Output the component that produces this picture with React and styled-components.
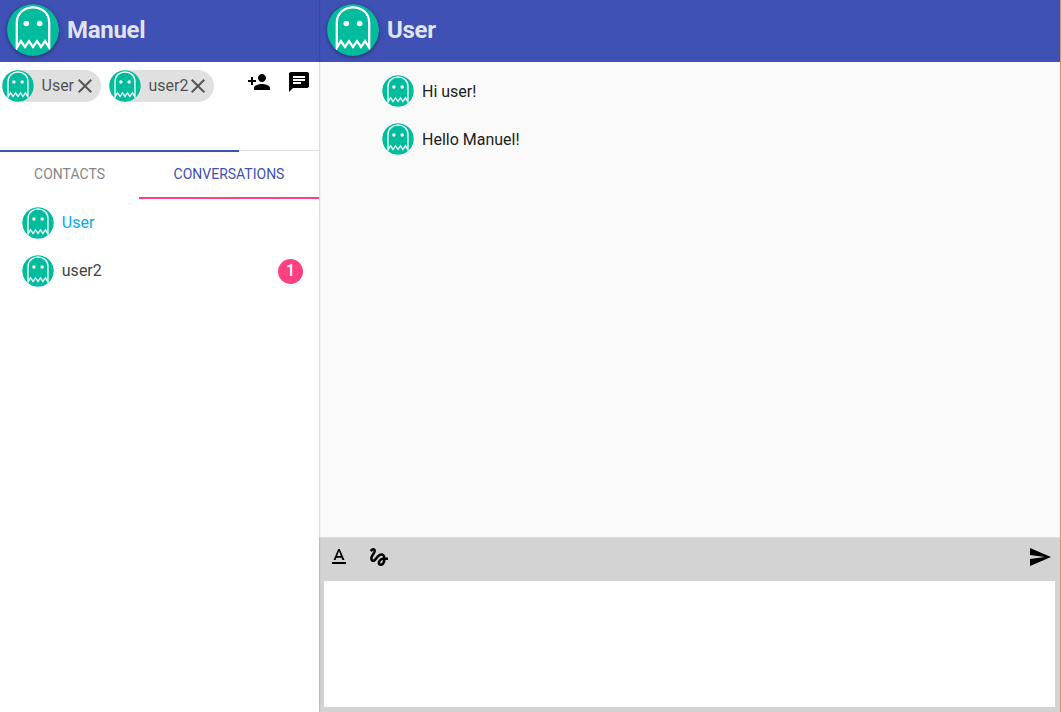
import React from "react";
import styled, { createGlobalStyle } from "styled-components";
import { MdPersonAdd, MdChat, MdClose, MdTextFormat, MdGesture, MdSend } from "react-icons/md";

const GlobalStyle = createGlobalStyle`
  * { box-sizing: border-box; }
  body { margin: 0; background: #fafafa; font-family: Roboto, "Liberation Sans", sans-serif; font-size: 16px; overflow: hidden; }
`;

const Page = styled.div`
  display: flex;
  width: 100vw;
  height: 100vh;
  border-right: 1px solid #db9359;
`;

const Sidebar = styled.aside`
  display: flex;
  flex-direction: column;
  flex: 0 0 319px;
  background: #fff;
  box-shadow: 0 0 2px rgba(0, 0, 0, 0.35);
  z-index: 1;
`;

const Main = styled.main`
  display: flex;
  flex-direction: column;
  flex: 1;
  min-width: 0;
`;

const Header = styled.header`
  display: flex;
  align-items: center;
  flex: 0 0 62px;
  gap: 8px;
  padding: 0 7px 2px ${(p) => p.$inset}px;
  background: #3f51b5;
`;

const Title = styled.h1`
  margin: 0;
  font-size: 24px;
  line-height: 28px;
  font-weight: 700;
  letter-spacing: -0.3px;
  color: rgba(255, 255, 255, 0.87);
`;

const AvatarSvg = styled.svg`
  display: block;
  flex: none;
  width: ${(p) => p.$size}px;
  height: ${(p) => p.$size}px;
  border-radius: 50%;
  box-shadow: ${(p) => (p.$raised ? "0 1px 4px rgba(0, 0, 0, 0.4)" : "none")};
`;

function Avatar({ size = 32, raised = false }) {
  return (
    <AvatarSvg $size={size} $raised={raised} viewBox="0 0 52 52">
      <circle cx="26" cy="26" r={raised ? 26 : 25.6} fill="#00bc9c" />
      <path
        d="M9.8 43.8V18.5C9.8 9.5 17 3.3 26 3.3S42.2 9.5 42.2 18.5V43.8L38.1 37.2L34 43L30 37.2L26 43L22 37.2L18 43L13.9 37.2Z"
        fill="none"
        stroke="#fff"
        strokeOpacity={raised ? 1 : 0.9}
        strokeWidth="2.3"
      />
      <circle cx="19.3" cy="19.5" r="2.8" fill="#fff" />
      <circle cx="32.7" cy="19.5" r="2.8" fill="#fff" />
    </AvatarSvg>
  );
}

const Picker = styled.div`
  display: flex;
  flex: 0 0 90px;
  justify-content: space-between;
  padding-top: 8px;
  background: linear-gradient(#3f51b5, #3f51b5) 0 88px / 239px 2px no-repeat,
    linear-gradient(#e0e0e0, #e0e0e0) 0 88px / 100% 1px no-repeat;
`;

const Chips = styled.div`
  display: flex;
  align-items: flex-start;
  gap: 8px;
  padding-left: 2px;
`;

const Chip = styled.div`
  display: flex;
  align-items: center;
  width: ${(p) => p.$width}px;
  height: 32px;
  border-radius: 16px;
  background: #e0e0e0;
  color: rgba(0, 0, 0, 0.67);
`;

const ChipLabel = styled.span`
  flex: 1;
  padding-left: 7.5px;
  line-height: 32px;
  white-space: nowrap;
`;

const ChipClose = styled(MdClose)`
  flex: none;
  margin-left: -4px;
  margin-right: 4px;
  color: rgba(0, 0, 0, 0.62);
`;

const Actions = styled.div`
  display: flex;
  align-items: flex-start;
  gap: 16px;
  padding-right: 8px;
`;

const Tabs = styled.nav`
  display: flex;
  flex: 0 0 47px;
`;

const Tab = styled.button`
  flex: 0 0 ${(p) => p.$width}px;
  padding: 0 0 1px;
  border: 0;
  border-bottom: 2px solid ${(p) => (p.$active ? "#ff4081" : "transparent")};
  background: none;
  font: 14px Roboto, sans-serif;
  color: ${(p) => (p.$active ? "#3f51b5" : "#868686")};
`;

const Conversation = styled.div`
  display: flex;
  align-items: center;
  height: 48px;
  gap: 7.5px;
  padding: 0 16px 0 22.3px;
  color: ${(p) => (p.$active ? "#03a9f4" : "#424242")};
`;

const RowLabel = styled.span`
  flex: 1;
  padding-bottom: 1px;
`;

const Badge = styled.span`
  width: 25px;
  height: 25px;
  border-radius: 50%;
  background: #ff4081;
  color: #fff;
  font-weight: 500;
  line-height: 24px;
  text-align: center;
`;

const Messages = styled.section`
  flex: 1;
  padding: 5px 0 0 63px;
  background: #fafafa;
`;

const Message = styled.div`
  display: flex;
  align-items: center;
  height: 48px;
  gap: 8px;
  color: #212121;
`;

const Composer = styled.footer`
  display: flex;
  flex-direction: column;
  flex: 0 0 175px;
  padding: 0 5px 5px;
  border-top: 1px solid #dedede;
  background: #d3d3d3;
`;

const ComposerTools = styled.div`
  display: flex;
  flex: 0 0 43px;
  gap: 16px;
  padding: 7px 3px 0;
`;

const Send = styled(MdSend)`
  margin-left: auto;
`;

const Editor = styled.textarea`
  flex: 1;
  border: 0;
  padding: 8px;
  resize: none;
  outline: none;
  background: #fff;
  font: inherit;
`;

export default function App() {
  return (
    <>
      <GlobalStyle />
      <Page>
        <Sidebar>
          <Header $inset={7}>
            <Avatar size={52} raised />
            <Title>Manuel</Title>
          </Header>
          <Picker>
            <Chips>
              <Chip $width={99}>
                <Avatar />
                <ChipLabel>User</ChipLabel>
                <ChipClose size={24} />
              </Chip>
              <Chip $width={105}>
                <Avatar />
                <ChipLabel>user2</ChipLabel>
                <ChipClose size={24} />
              </Chip>
            </Chips>
            <Actions>
              <MdPersonAdd size={24} />
              <MdChat size={24} />
            </Actions>
          </Picker>
          <Tabs>
            <Tab $width={139}>CONTACTS</Tab>
            <Tab $width={180} $active>CONVERSATIONS</Tab>
          </Tabs>
          <Conversation $active>
            <Avatar />
            <RowLabel>User</RowLabel>
          </Conversation>
          <Conversation>
            <Avatar />
            <RowLabel>user2</RowLabel>
            <Badge>1</Badge>
          </Conversation>
        </Sidebar>
        <Main>
          <Header $inset={8}>
            <Avatar size={52} raised />
            <Title>User</Title>
          </Header>
          <Messages>
            <Message>
              <Avatar />
              Hi user!
            </Message>
            <Message>
              <Avatar />
              Hello Manuel!
            </Message>
          </Messages>
          <Composer>
            <ComposerTools>
              <MdTextFormat size={24} />
              <MdGesture size={24} />
              <Send size={24} />
            </ComposerTools>
            <Editor />
          </Composer>
        </Main>
      </Page>
    </>
  );
}
